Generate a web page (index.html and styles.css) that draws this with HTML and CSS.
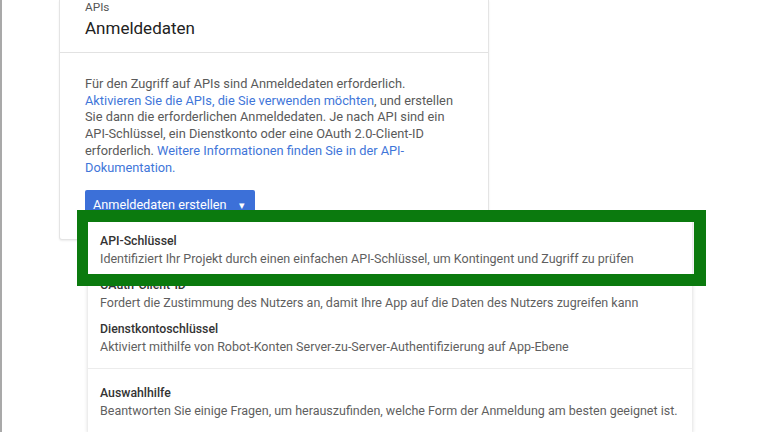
FILE: index.html
```html
<!DOCTYPE html>
<html lang="de">
<head>
    <meta charset="UTF-8">
    <meta name="viewport" content="width=device-width, initial-scale=1.0">
    <title>Anmeldedaten</title>
    <link rel="stylesheet" href="styles.css">
</head>
<body>
    <div class="page">
        <!-- Karte mit Anmeldedaten -->
        <div class="card">
            <div class="card-header">
                <div class="eyebrow">APIs</div>
                <h1 class="title">Anmeldedaten</h1>
            </div>
            <div class="card-body">
                <p class="intro">
                    Für den Zugriff auf APIs sind Anmeldedaten erforderlich.<br>
                    <a href="#">Aktivieren Sie die APIs, die Sie verwenden möchten</a>, und erstellen<br>
                    Sie dann die erforderlichen Anmeldedaten. Je nach API sind ein<br>
                    API-Schlüssel, ein Dienstkonto oder eine OAuth 2.0-Client-ID<br>
                    erforderlich. <a href="#">Weitere Informationen finden Sie in der API-<br>Dokumentation.</a>
                </p>
                <button class="create-btn">Anmeldedaten erstellen <span class="caret">&#9662;</span></button>
            </div>
        </div>

        <!-- Dropdown-Menü -->
        <div class="menu">
            <div class="menu-section">
                <div class="menu-item">
                    <div class="item-title">API-Schlüssel</div>
                    <div class="item-desc">Identifiziert Ihr Projekt durch einen einfachen API-Schlüssel, um Kontingent und Zugriff zu prüfen</div>
                </div>
                <div class="menu-item">
                    <div class="item-title">OAuth-Client-ID</div>
                    <div class="item-desc">Fordert die Zustimmung des Nutzers an, damit Ihre App auf die Daten des Nutzers zugreifen kann</div>
                </div>
                <div class="menu-item">
                    <div class="item-title">Dienstkontoschlüssel</div>
                    <div class="item-desc">Aktiviert mithilfe von Robot-Konten Server-zu-Server-Authentifizierung auf App-Ebene</div>
                </div>
            </div>
            <div class="menu-section">
                <div class="menu-item">
                    <div class="item-title">Auswahlhilfe</div>
                    <div class="item-desc">Beantworten Sie einige Fragen, um herauszufinden, welche Form der Anmeldung am besten geeignet ist.</div>
                </div>
            </div>
        </div>

        <!-- Markierung -->
        <div class="highlight"></div>
    </div>
</body>
</html>
```

FILE: styles.css
```css
/* Grundlayout */
body {
    margin: 0;
    background-color: #fff;
    font-family: Roboto, "Liberation Sans", Arial, sans-serif;
    overflow: hidden;
}

.page {
    position: relative;
    height: 432px;
    border-left: 2px solid #a9a9a9;
    padding-left: 57px;
}

/* Karte */
.card {
    width: 428px;
    background-color: #fff;
    border: 1px solid #e4e4e4;
    border-top: none;
    border-radius: 0 0 3px 3px;
    box-shadow: 0 1px 2px rgba(0, 0, 0, 0.08);
}

.card-header {
    padding: 0 25px 12px;
    border-bottom: 1px solid #e2e2e2;
}

.eyebrow {
    font-size: 11.8px;
    line-height: 15px;
    color: #555;
}

.title {
    margin: 1px 0 0;
    font-size: 17px;
    line-height: 24px;
    font-weight: 400;
    color: #222;
}

.card-body {
    padding: 23px 25px 21px;
}

.intro {
    margin: 0 0 14px;
    font-size: 12.8px;
    line-height: 16.7px;
    color: #5a5a5a;
    white-space: nowrap;
}

.intro a {
    color: #3f76d9;
    text-decoration: none;
}

/* Button */
.create-btn {
    height: 28px;
    padding: 0 10px 0 8px;
    background-color: #3c70d8;
    color: #fff;
    border: none;
    border-radius: 2px;
    font-family: inherit;
    font-size: 12.7px;
    cursor: pointer;
}

.caret {
    margin-left: 9px;
    font-size: 11px;
}

/* Dropdown-Menü */
.menu {
    position: absolute;
    left: 86px;
    top: 217px;
    width: 604px;
    background-color: #fff;
    box-shadow: 0 1px 4px rgba(0, 0, 0, 0.18);
}

.menu-section {
    padding: 11px 0 8px;
    border-bottom: 1px solid #ececec;
}

.menu-item {
    padding: 5px 12px;
}

.item-title {
    font-size: 12.3px;
    line-height: 17px;
    font-weight: 500;
    color: #333;
}

.item-desc {
    font-size: 12.5px;
    line-height: 17px;
    color: #5f5f5f;
}

/* Grüne Markierung */
.highlight {
    position: absolute;
    left: 75px;
    top: 210px;
    width: 606px;
    height: 52px;
    border: 11px solid #0b7a0e;
    border-width: 12px 12px 12px 11px;
}
```
